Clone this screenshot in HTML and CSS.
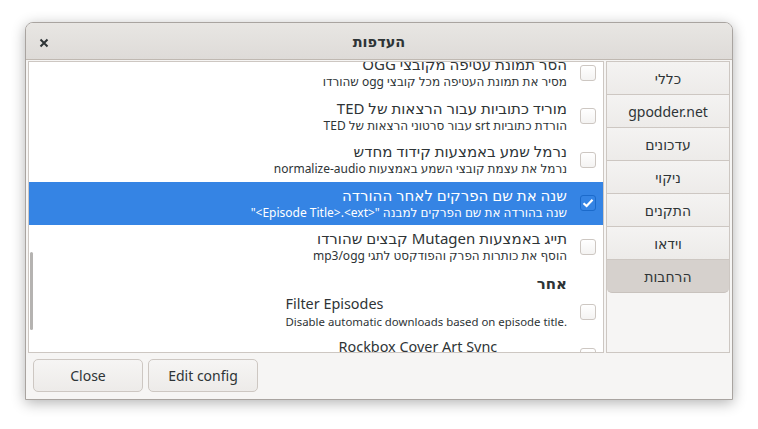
FILE: index.html
```html
<!DOCTYPE html>
<html lang="he">
<head>
<meta charset="utf-8">
<title>העדפות</title>
<link rel="stylesheet" href="styles.css">
</head>
<body>
<div class="window" dir="rtl">
  <div class="titlebar">
    <span class="title">העדפות</span>
    <button class="close-x" aria-label="close">
      <svg width="10" height="10" viewBox="0 0 10 10"><path d="M1.5 1.5 L8.5 8.5 M8.5 1.5 L1.5 8.5" stroke="#2e3436" stroke-width="2" stroke-linecap="butt" fill="none"/></svg>
    </button>
  </div>
  <div class="content">
    <div class="sidebar">
      <div class="tab">כללי</div>
      <div class="tab">gpodder.net</div>
      <div class="tab">עדכונים</div>
      <div class="tab">ניקוי</div>
      <div class="tab">התקנים</div>
      <div class="tab">וידאו</div>
      <div class="tab active">הרחבות</div>
    </div>
    <div class="list">
      <div class="list-inner">
        <div class="row">
          <span class="check"></span>
          <div class="text">
            <div class="t">הסר תמונת עטיפה מקובצי OGG</div>
            <div class="s">מסיר את תמונת העטיפה מכל קובצי ogg שהורדו</div>
          </div>
        </div>
        <div class="row">
          <span class="check"></span>
          <div class="text">
            <div class="t">מוריד כתוביות עבור הרצאות של TED</div>
            <div class="s">הורדת כתוביות srt עבור סרטוני הרצאות של TED</div>
          </div>
        </div>
        <div class="row">
          <span class="check"></span>
          <div class="text">
            <div class="t">נרמל שמע באמצעות קידוד מחדש</div>
            <div class="s">נרמל את עצמת קובצי השמע באמצעות normalize-audio</div>
          </div>
        </div>
        <div class="row selected">
          <span class="check on">
            <svg width="12" height="10" viewBox="0 0 12 10"><path d="M1.5 5.2 L4.6 8 L10.5 1.8" stroke="#fff" stroke-width="2.2" fill="none"/></svg>
          </span>
          <div class="text">
            <div class="t">שנה את שם הפרקים לאחר ההורדה</div>
            <div class="s">שנה בהורדה את שם הפרקים למבנה "&lt;Episode Title&gt;.&lt;ext&gt;"</div>
          </div>
        </div>
        <div class="row">
          <span class="check"></span>
          <div class="text">
            <div class="t">תייג באמצעות Mutagen קבצים שהורדו</div>
            <div class="s">הוסף את כותרות הפרק והפודקסט לתגי mp3/ogg</div>
          </div>
        </div>
        <div class="header">אחר</div>
        <div class="row">
          <span class="check"></span>
          <div class="text latin" dir="ltr">
            <div class="t">Filter Episodes</div>
            <div class="s">Disable automatic downloads based on episode title.</div>
          </div>
        </div>
        <div class="row">
          <span class="check"></span>
          <div class="text latin" dir="ltr">
            <div class="t">Rockbox Cover Art Sync</div>
            <div class="s">Copy Cover Art To Rockboxed Media Player</div>
          </div>
        </div>
      </div>
      <div class="scrollbar"></div>
    </div>
  </div>
  <div class="actions" dir="ltr">
    <button class="btn">Close</button>
    <button class="btn">Edit config</button>
  </div>
</div>
</body>
</html>
```

FILE: styles.css
```css
html, body {
  margin: 0;
  padding: 0;
  background: #ffffff;
}
body {
  font-family: "Noto Sans", "DejaVu Sans", sans-serif;
  color: #2e3436;
  width: 758px;
  height: 429px;
  overflow: hidden;
}
.window {
  margin: 22px 0 0 25px;
  width: 706px;
  height: 376px;
  background: #f6f5f4;
  border: 1px solid #a9a4a0;
  border-radius: 8px 8px 0 0;
  box-shadow: 0 3px 14px rgba(0,0,0,0.3);
  display: flex;
  flex-direction: column;
  overflow: hidden;
}
.titlebar {
  height: 36px;
  flex: none;
  background: linear-gradient(#e8e6e3, #dedbd8);
  border-bottom: 1px solid #bfb8b1;
  display: flex;
  align-items: center;
  justify-content: center;
  position: relative;
}
.title {
  font-weight: bold;
  font-size: 14.5px;
}
.close-x {
  position: absolute;
  left: 12px;
  top: 14px;
  width: 12px;
  height: 12px;
  padding: 0;
  border: 0;
  background: transparent;
  display: flex;
  align-items: center;
  justify-content: center;
}
.content {
  flex: none;
  height: 292px;
  display: flex;
  gap: 2px;
  padding: 1px 2px 0 2px;
}
.sidebar {
  width: 122px;
  flex: none;
  border: 1px solid #cdc7c2;
  background: #f6f5f4;
}
.tab {
  height: 32px;
  border-bottom: 1px solid #cdc7c2;
  background: linear-gradient(#f4f3f2, #edebe9);
  display: flex;
  align-items: center;
  justify-content: center;
  font-size: 14px;
  color: #2e3436;
}
.tab.active {
  background: #d6d1cd;
  border-bottom-color: #c8c2bd;
  border-radius: 0 0 5px 5px;
}
.list {
  flex: 1;
  border: 1px solid #cdc7c2;
  background: #ffffff;
  position: relative;
  overflow: hidden;
}
.list-inner {
  margin-top: -11px;
}
.row {
  height: 43.5px;
  display: flex;
  align-items: center;
  padding-right: 7px;
  gap: 13px;
}
.row.selected {
  background: #3584e4;
  color: #ffffff;
}
.check {
  width: 14px;
  height: 14px;
  flex: none;
  border: 1px solid #cdc7c2;
  border-radius: 3px;
  background: linear-gradient(#ffffff, #f4f3f2);
  display: flex;
  align-items: center;
  justify-content: center;
}
.check.on {
  background: #3584e4;
  border-color: #1b6acb;
}
.text {
  display: flex;
  flex-direction: column;
}
.text .t {
  font-size: 15px;
  line-height: 18px;
}
.text .s {
  font-size: 12px;
  line-height: 16px;
  margin-top: 1px;
}
.text.latin .t {
  font-size: 14.4px;
}
.text.latin .s {
  font-size: 11.4px;
}
.header {
  height: 22px;
  padding-right: 36px;
  font-weight: bold;
  font-size: 15px;
  line-height: 28px;
}
.scrollbar {
  position: absolute;
  left: 1px;
  top: 190px;
  width: 3px;
  height: 78px;
  border-radius: 2px;
  background: #b5b3b1;
}
.actions {
  flex: 1;
  display: flex;
  gap: 5px;
  padding: 6px 0 0 7px;
}
.btn {
  width: 110px;
  height: 33px;
  border: 1px solid #cdc7c2;
  border-radius: 5px;
  background: linear-gradient(#f6f5f4, #edebe9);
  font-family: "Noto Sans", "DejaVu Sans", sans-serif;
  font-size: 14px;
  color: #2e3436;
  padding: 0;
}
```
